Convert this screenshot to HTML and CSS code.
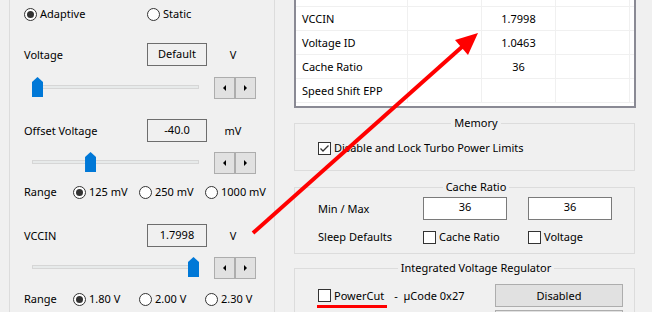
FILE: index.html
```html
<!DOCTYPE html>
<html lang="en">
<head>
    <meta charset="UTF-8">
    <title>FIVR Control</title>
    <link rel="stylesheet" href="styles.css">
</head>
<body>
    <div class="window">
        <div class="panel">
            <div class="row mode">
                <span class="opt"><span class="radio on"></span>Adaptive</span>
                <span class="opt"><span class="radio"></span>Static</span>
            </div>

            <div class="row field first">
                <span class="label">Voltage</span>
                <span class="box">Default</span>
                <span class="unit">V</span>
            </div>
            <div class="row slide first">
                <div class="slider"><div class="track"></div><div class="thumb" style="--pos: 0"></div></div>
                <div class="spin"><button class="dec"></button><button class="inc"></button></div>
            </div>

            <div class="row field">
                <span class="label">Offset Voltage</span>
                <span class="box">-40.0</span>
                <span class="unit">mV</span>
            </div>
            <div class="row slide">
                <div class="slider"><div class="track"></div><div class="thumb" style="--pos: 0.34"></div></div>
                <div class="spin"><button class="dec"></button><button class="inc"></button></div>
            </div>
            <div class="row range">
                <span class="label">Range</span>
                <span class="opt"><span class="radio on"></span>125 mV</span>
                <span class="opt"><span class="radio"></span>250 mV</span>
                <span class="opt"><span class="radio"></span>1000 mV</span>
            </div>

            <div class="row field vccin">
                <span class="label">VCCIN</span>
                <span class="box">1.7998</span>
                <span class="unit">V</span>
            </div>
            <div class="row slide">
                <div class="slider"><div class="track"></div><div class="thumb" style="--pos: 1"></div></div>
                <div class="spin"><button class="dec"></button><button class="inc"></button></div>
            </div>
            <div class="row range last">
                <span class="label">Range</span>
                <span class="opt"><span class="radio on"></span>1.80 V</span>
                <span class="opt"><span class="radio"></span>2.00 V</span>
                <span class="opt"><span class="radio"></span>2.30 V</span>
            </div>
        </div>

        <div class="side">
            <div class="table">
                <div class="tr"><span></span><span></span><span></span><span></span></div>
                <div class="tr"><span>VCCIN</span><span></span><span>1.7998</span><span></span></div>
                <div class="tr"><span>Voltage ID</span><span></span><span>1.0463</span><span></span></div>
                <div class="tr"><span>Cache Ratio</span><span></span><span>36</span><span></span></div>
                <div class="tr"><span>Speed Shift EPP</span><span></span><span></span><span></span></div>
            </div>

            <fieldset class="memory">
                <legend>Memory</legend>
                <div class="row">
                    <span class="opt">
                        <span class="check"><svg width="11" height="11" viewBox="0 0 11 11"><polyline points="1.5,5.5 4,8 9.5,2.5" fill="none" stroke="#333" stroke-width="1.3"/></svg></span>
                        Disable and Lock Turbo Power Limits
                    </span>
                </div>
            </fieldset>

            <fieldset class="cache">
                <legend>Cache Ratio</legend>
                <div class="row pair">
                    <span class="label">Min / Max</span>
                    <span class="edit">36</span>
                    <span class="edit">36</span>
                </div>
                <div class="row sleep">
                    <span class="label">Sleep Defaults</span>
                    <span class="opt"><span class="check"></span>Cache Ratio</span>
                    <span class="opt"><span class="check"></span>Voltage</span>
                </div>
            </fieldset>

            <fieldset class="ivr">
                <legend>Integrated Voltage Regulator</legend>
                <div class="row ivr-row">
                    <span class="opt"><span class="check"></span>PowerCut<span class="ucode">-&nbsp; µCode 0x27</span></span>
                    <button class="btn">Disabled</button>
                </div>
                <div class="row ivr-row next">
                    <span class="opt"></span>
                    <button class="btn"></button>
                </div>
            </fieldset>
        </div>
    </div>

    <svg class="overlay" width="652" height="312" viewBox="0 0 652 312">
        <line x1="253" y1="233" x2="463" y2="46" stroke="#ff0000" stroke-width="4"/>
        <polygon points="478,33 455,40 468,55" fill="#ff0000"/>
        <rect x="317" y="305" width="70" height="3" fill="#ff0000"/>
    </svg>
</body>
</html>
```

FILE: styles.css
```css
body {
    margin: 0;
    width: 652px;
    height: 312px;
    overflow: hidden;
    position: relative;
    background-color: #f0f0f0;
    font-family: "Noto Sans", "DejaVu Sans", sans-serif;
    font-size: 11px;
    line-height: 16px;
    color: #000;
}
.window {
    display: flex;
    gap: 19px;
    padding-left: 9px;
    height: 100%;
}

/* left group */
.panel {
    width: 266px;
    box-sizing: border-box;
    border-left: 1px solid #dcdcdc;
    border-right: 1px solid #dcdcdc;
    padding: 4px 0 0 14px;
}
.row {
    display: flex;
    align-items: center;
}
.opt {
    display: flex;
    align-items: center;
    gap: 3px;
    white-space: nowrap;
}
.mode {
    height: 20px;
}
.mode .opt:first-child {
    width: 123px;
}
.field {
    height: 23px;
    margin-top: 20px;
}
.field.first {
    margin-top: 19px;
}
.field.vccin {
    margin-top: 22px;
}
.field .label {
    width: 123px;
}
.box {
    width: 60px;
    height: 23px;
    box-sizing: border-box;
    border: 1px solid #6d6d6d;
    background-color: #f0f0f0;
    text-align: center;
    line-height: 19px;
}
.unit {
    width: 52px;
    text-align: center;
}
.slide {
    height: 22px;
    margin-top: 10px;
}
.slide.first {
    margin-top: 11px;
}
.slider {
    position: relative;
    width: 167px;
    height: 22px;
    margin-left: 8px;
}
.track {
    margin-top: 8px;
    height: 4px;
    box-sizing: border-box;
    border: 1px solid #d6d6d6;
    background-color: #e7eaea;
}
.thumb {
    position: absolute;
    top: 0;
    left: calc(var(--pos) * 156px);
    width: 11px;
    height: 20px;
    background-color: #0078d7;
    clip-path: polygon(0 5px, 5.5px 0, 11px 5px, 11px 100%, 0 100%);
}
.spin {
    display: flex;
    margin-left: 15px;
}
.spin button {
    width: 21px;
    height: 22px;
    padding: 0;
    border: 1px solid #adadad;
    background-color: #e1e1e1;
    display: flex;
    align-items: center;
    justify-content: center;
}
.spin .dec::before {
    content: "";
    border-top: 3px solid transparent;
    border-bottom: 3px solid transparent;
    border-right: 3px solid #000;
}
.spin .inc::before {
    content: "";
    border-top: 3px solid transparent;
    border-bottom: 3px solid transparent;
    border-left: 3px solid #000;
}
.range {
    height: 20px;
    margin-top: 8px;
}
.range.last {
    margin-top: 10px;
}
.range .label {
    width: 49px;
}
.range .opt {
    width: 66px;
}
.radio {
    position: relative;
    flex: none;
    width: 13px;
    height: 13px;
    box-sizing: border-box;
    border: 1px solid #333;
    border-radius: 50%;
    background-color: #fff;
}
.radio.on::after {
    content: "";
    position: absolute;
    inset: 2px;
    border-radius: 50%;
    background-color: #333;
}
.check {
    flex: none;
    width: 13px;
    height: 13px;
    box-sizing: border-box;
    border: 1px solid #333;
    background-color: #fff;
}
.check svg {
    display: block;
}

/* right column */
.side {
    width: 342px;
}
.table {
    margin-top: -19px;
    height: 127px;
    box-sizing: border-box;
    border: 2px solid #8a8a94;
    background-color: #fff;
}
.tr {
    display: grid;
    grid-template-columns: 112px 74px 74px 74px;
    height: 24px;
    box-sizing: border-box;
    border-bottom: 1px solid #f0f0f0;
}
.tr span {
    border-right: 1px solid #f0f0f0;
    line-height: 23px;
    text-align: center;
}
.tr span:first-child {
    text-align: left;
    padding-left: 6px;
}
fieldset {
    width: 341px;
    box-sizing: border-box;
    margin: 0;
    border: 1px solid #dcdcdc;
    padding: 0 0 0 23px;
}
legend {
    margin: 0 auto;
    padding: 0 3px;
}
.memory {
    margin-top: 7px;
    padding-top: 9px;
    padding-bottom: 14px;
}
.memory .row {
    height: 16px;
}
.cache {
    margin-top: 8px;
    padding-top: 2px;
    padding-bottom: 8px;
}
.cache .label {
    width: 105px;
}
.pair {
    height: 23px;
}
.edit {
    width: 84px;
    height: 23px;
    box-sizing: border-box;
    border: 1px solid #7a7a7a;
    background-color: #fff;
    text-align: center;
    line-height: 18px;
}
.edit + .edit {
    margin-left: 21px;
}
.sleep {
    height: 16px;
    margin-top: 9px;
}
.sleep .opt {
    width: 105px;
}
.ivr {
    margin-top: 6px;
    padding-top: 8px;
    padding-bottom: 8px;
}
.ivr-row {
    height: 23px;
}
.ivr-row.next {
    margin-top: 3px;
}
.ivr-row .opt {
    width: 177px;
}
.ucode {
    margin-left: 7px;
}
.btn {
    width: 128px;
    height: 23px;
    padding: 0;
    border: 1px solid #adadad;
    background-color: #e1e1e1;
    font: inherit;
    color: #000;
    line-height: 19px;
}
.overlay {
    position: absolute;
    left: 0;
    top: 0;
    pointer-events: none;
}
```
